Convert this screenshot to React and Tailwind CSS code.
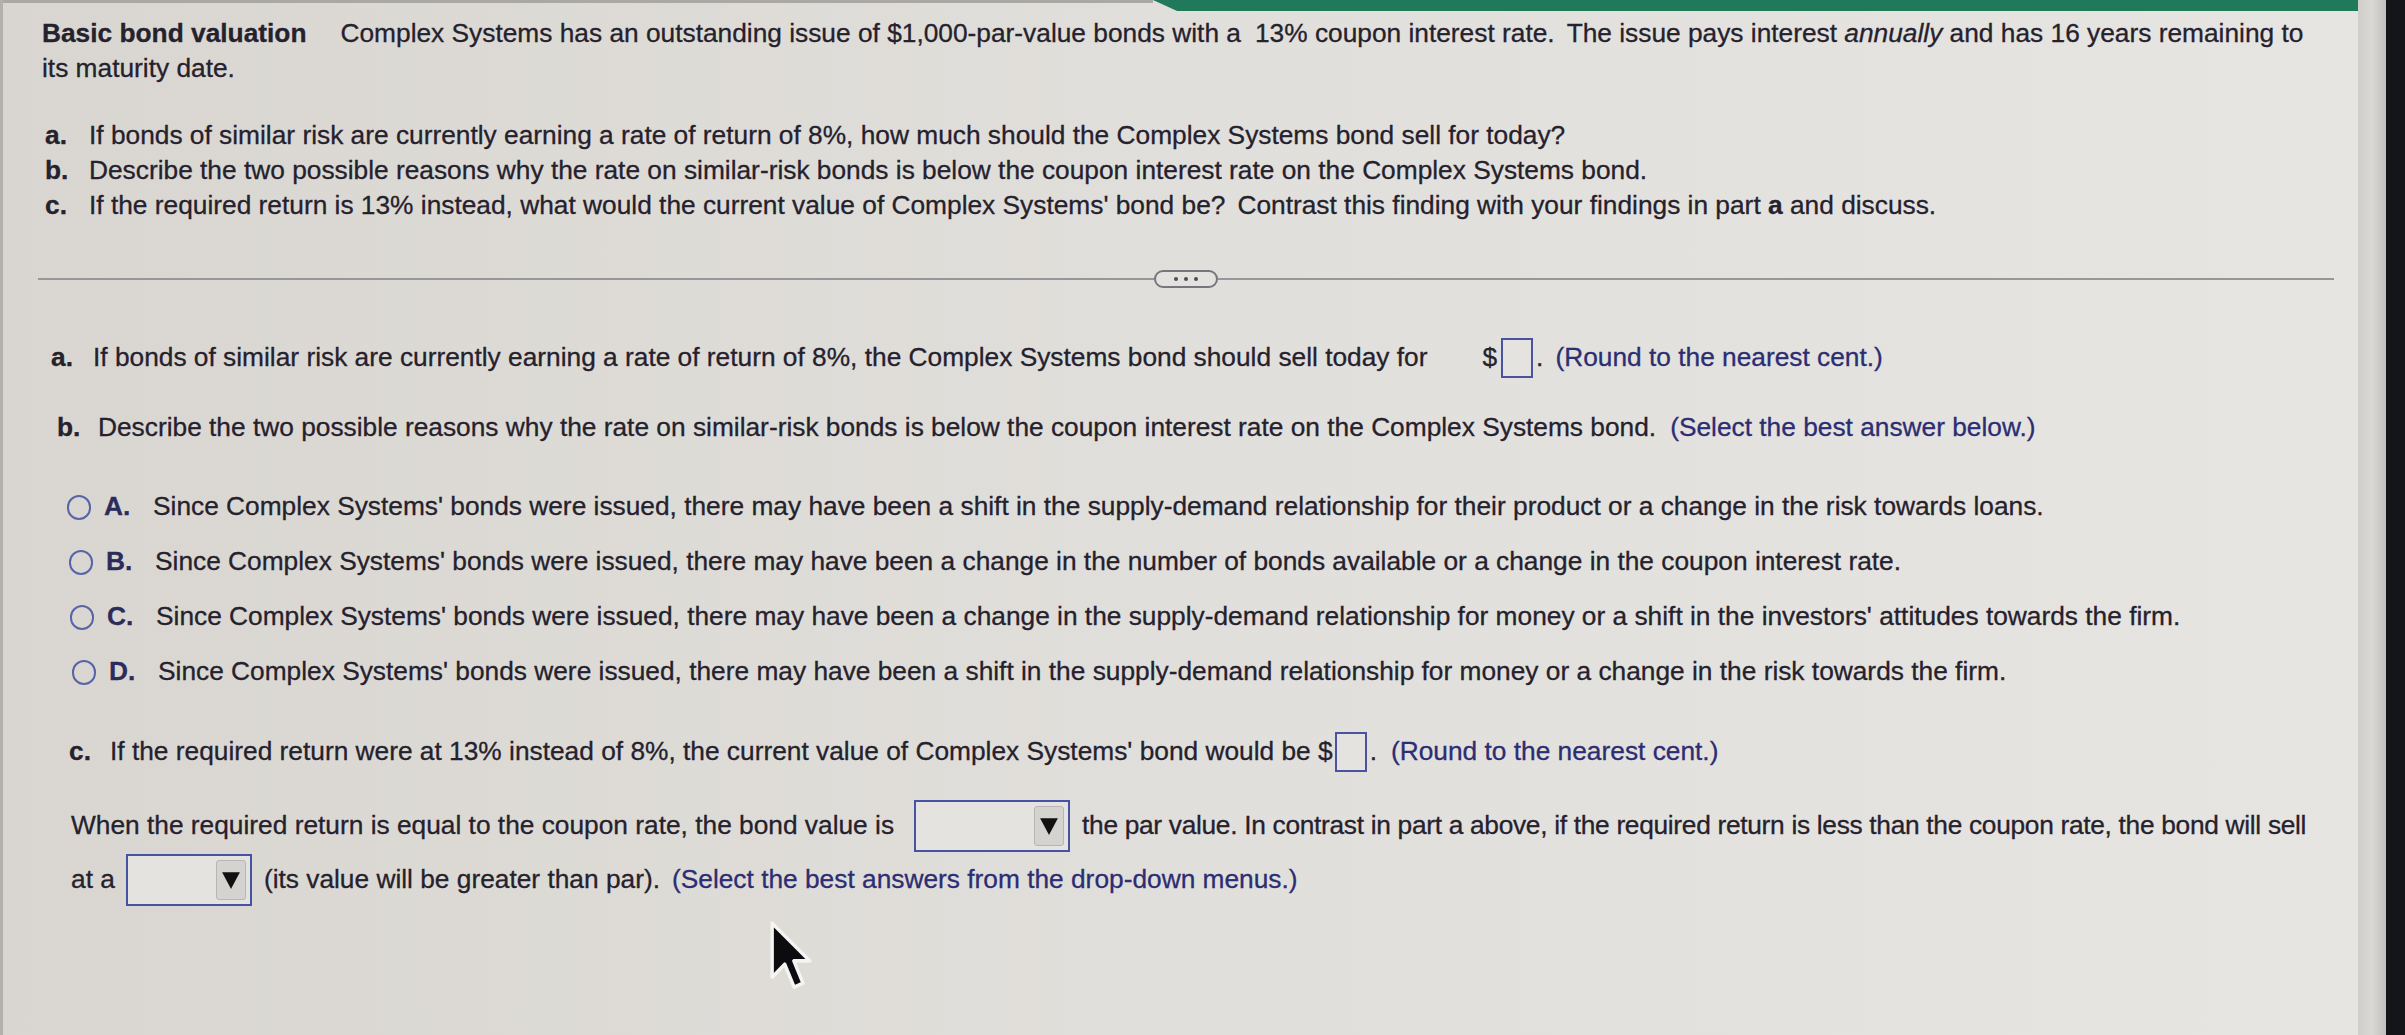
import React from "react";

const FONT = { fontFamily: '"Liberation Sans", Arial, Helvetica, sans-serif' };

function InputBox() {
  return <span className="inline-block w-[32px] h-[40px] border-2 border-[#4b52a0] bg-[#e4e3df]" />;
}

function Dropdown({ w }) {
  return (
    <span className={`inline-flex ${w} h-[52px] border-2 border-[#4653a3] justify-end items-stretch p-[4px] bg-[#e4e3df]`}>
      <span className="w-[30px] flex items-center justify-center bg-[#d5d3cf] border border-[#b8b6b2] rounded-[3px]">
        <svg width="20" height="20" viewBox="0 0 18 18">
          <polygon points="1,2 17,2 9,17" fill="#111" />
        </svg>
      </span>
    </span>
  );
}

function Radio() {
  return <span className="inline-block w-[24px] h-[25px] rounded-full border-[2.5px] border-[#5764a8]" />;
}

const options = [
  ["A.", "Since Complex Systems' bonds were issued, there may have been a shift in the supply-demand relationship for their product or a change in the risk towards loans.", "pl-[64px]"],
  ["B.", "Since Complex Systems' bonds were issued, there may have been a change in the number of bonds available or a change in the coupon interest rate.", "pl-[66px]"],
  ["C.", "Since Complex Systems' bonds were issued, there may have been a change in the supply-demand relationship for money or a shift in the investors' attitudes towards the firm.", "pl-[67px]"],
  ["D.", "Since Complex Systems' bonds were issued, there may have been a shift in the supply-demand relationship for money or a change in the risk towards the firm.", "pl-[69px]"],
];

export default function App() {
  return (
    <div style={FONT} className="flex w-[2405px] h-[1035px] overflow-hidden text-[26.3px] text-[#25212d] bg-[#e2e0dc] [-webkit-text-stroke:0.3px_currentColor]">
      <div className="relative flex-1 flex flex-col bg-gradient-to-r from-[#d9d6d1] via-[#e1dfdb] to-[#e6e5e1] border-l-[3px] border-[#b3b0ab]">
        {/* top bar */}
        <div className="h-[11px] flex shrink-0">
          <div className="w-[1150px] border-t-[3px] border-[#aaa8a4]" />
          <div className="flex-1 bg-[#20795b] [clip-path:polygon(0_0,100%_0,100%_100%,2%_100%)]" />
        </div>

        {/* problem statement */}
        <p className="mt-[5px] pl-[39px] leading-[35px] whitespace-nowrap">
          <b>Basic bond valuation</b>
          <span className="ml-[34px]">Complex Systems has an outstanding issue of $1,000-par-value bonds with a</span>
          <span className="ml-[14px]">13% coupon interest rate.</span>
          <span className="ml-[12px]">The issue pays interest <i>annually</i> and has 16 years remaining to</span>
          <br />
          its maturity date.
        </p>

        <div className="mt-[32px] pl-[42px] flex flex-col">
          <div className="h-[35px] flex items-center">
            <b className="w-[44px]">a.</b>
            <span>If bonds of similar risk are currently earning a rate of return of 8%, how much should the Complex Systems bond sell for today?</span>
          </div>
          <div className="h-[35px] flex items-center">
            <b className="w-[44px]">b.</b>
            <span>Describe the two possible reasons why the rate on similar-risk bonds is below the coupon interest rate on the Complex Systems bond.</span>
          </div>
          <div className="h-[35px] flex items-center">
            <b className="w-[44px]">c.</b>
            <span>
              If the required return is 13% instead, what would the current value of Complex Systems' bond be?
              <span className="ml-[12px]">Contrast this finding with your findings in part <b>a</b> and discuss.</span>
            </span>
          </div>
        </div>

        {/* divider */}
        <div className="mt-[47px] ml-[35px] mr-[24px] h-[18px] flex items-center">
          <div className="flex-1 h-[2px] bg-[#97969a]" />
          <div className="w-[64px] h-[18px] rounded-full border-2 border-[#76767c] flex items-center justify-center gap-[6px] bg-[#e3e2de]">
            <span className="w-[4px] h-[4px] rounded-full bg-[#4d4d55]" />
            <span className="w-[4px] h-[4px] rounded-full bg-[#4d4d55]" />
            <span className="w-[4px] h-[4px] rounded-full bg-[#4d4d55]" />
          </div>
          <div className="flex-1 h-[2px] bg-[#97969a]" />
        </div>

        {/* answer a */}
        <div className="mt-[50px] h-[40px] pl-[48px] flex items-center whitespace-nowrap">
          <b className="w-[42px]">a.</b>
          <span>If bonds of similar risk are currently earning a rate of return of 8%, the Complex Systems bond should sell today for</span>
          <span className="ml-[55px] mr-[4px]">$</span>
          <InputBox />
          <span className="ml-[3px]">.</span>
          <span className="ml-[12px] text-[#2c2d72]">(Round to the nearest cent.)</span>
        </div>

        {/* answer b */}
        <div className="mt-[30px] h-[40px] pl-[54px] flex items-center whitespace-nowrap">
          <b className="w-[41px]">b.</b>
          <span>Describe the two possible reasons why the rate on similar-risk bonds is below the coupon interest rate on the Complex Systems bond.</span>
          <span className="ml-[14px] text-[#2c2d72]">(Select the best answer below.)</span>
        </div>

        {/* options */}
        <div className="mt-[39px] flex flex-col gap-[15px]">
          {options.map(([l, t, pl]) => (
            <div key={l} className={`h-[40px] ${pl} flex items-center whitespace-nowrap`}>
              <Radio />
              <b className="ml-[13px] w-[49px] text-[#2b2c5c]">{l}</b>
              <span>{t}</span>
            </div>
          ))}
        </div>

        {/* answer c */}
        <div className="mt-[40px] h-[40px] pl-[66px] flex items-center whitespace-nowrap">
          <b className="w-[41px]">c.</b>
          <span>If the required return were at 13% instead of 8%, the current value of Complex Systems' bond would be $</span>
          <span className="ml-[2px] flex"><InputBox /></span>
          <span className="ml-[3px]">.</span>
          <span className="ml-[14px] text-[#2c2d72]">(Round to the nearest cent.)</span>
        </div>

        {/* dropdown sentence */}
        <div className="mt-[27px] h-[54px] pl-[68px] flex items-center whitespace-nowrap">
          <span>When the required return is equal to the coupon rate, the bond value is</span>
          <span className="ml-[20px] flex"><Dropdown w="w-[156px]" /></span>
          <span className="ml-[12px] tracking-[-0.3px]">the par value. In contrast in part a above, if the required return is less than the coupon rate, the bond will sell</span>
        </div>
        <div className="h-[54px] pl-[68px] flex items-center whitespace-nowrap">
          <span>at a</span>
          <span className="ml-[11px] flex"><Dropdown w="w-[126px]" /></span>
          <span className="ml-[12px]">(its value will be greater than par).</span>
          <span className="ml-[12px] text-[#2c2d72]">(Select the best answers from the drop-down menus.)</span>
        </div>

        {/* mouse cursor */}
        <svg className="absolute left-[766px] top-[920px]" width="44" height="72" viewBox="0 0 14 22" preserveAspectRatio="none">
          <path d="M1 1 L1 17.5 L5 13.5 L8 20.5 L10.8 19.3 L7.9 12.5 L13 12.5 Z" fill="#0c0c0e" stroke="#f4f4f2" strokeWidth="1.1" strokeLinejoin="round" />
        </svg>
      </div>

      {/* right bezel */}
      <div className="w-[28px] bg-gradient-to-r from-[#cfceca] via-[#d9d8d5] to-[#c2c1be]" />
      <div className="w-[19px] bg-[#141519]" />
    </div>
  );
}
